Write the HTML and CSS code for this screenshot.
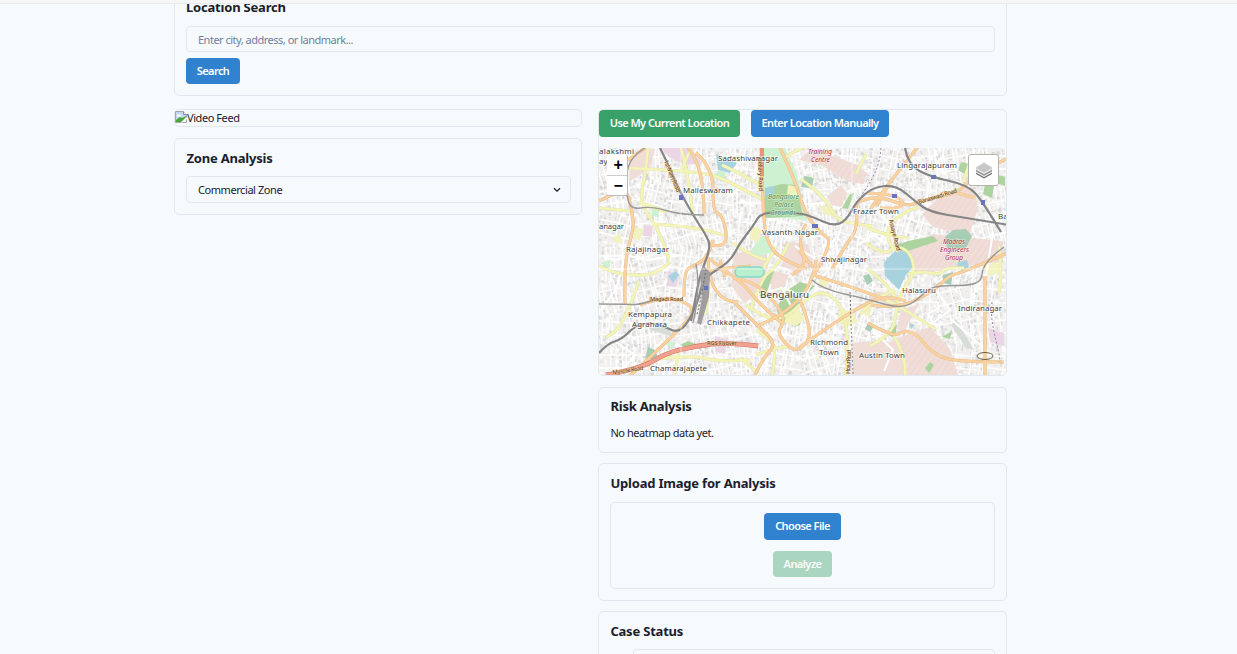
FILE: index.html
```html
<!DOCTYPE html>
<html lang="en">
<head>
<meta charset="utf-8">
<title>Location dashboard</title>
<link rel="stylesheet" href="styles.css">
</head>
<body>
<header class="topbar"></header>
<main class="page">
  <section class="card search-card">
    <h2>Location Search</h2>
    <input class="field" type="text" placeholder="Enter city, address, or landmark...">
    <button class="btn blue search-btn">Search</button>
  </section>
  <div class="columns">
    <div class="column">
      <div class="video"><svg class="broken" viewBox="0 0 12 12"><path d="M.5.5h8l3 3v8H.5z" fill="#c6d7f5" stroke="#a3a7ac"/><path d="M8.5.5v3h3" fill="#fff" stroke="#8d9196"/><path d="M2 4.500q1-2 2.500-1 2 0 1.500 2H2z" fill="#fff"/><path d="M1 11V9l4-3 2 1 4-2v1L6 11z" fill="#4aa535"/><path d="M6 12l6-6v6z" fill="#f7faff"/><path d="M7.500 11.500h4v-3" fill="none" stroke="#a3a7ac"/></svg><span>Video Feed</span></div>
      <section class="card zone-card">
        <h2>Zone Analysis</h2>
        <div class="field select"><span>Commercial Zone</span><svg class="chevron" viewBox="0 0 8 6"><path d="M1 1.200l3 3 3-3" fill="none" stroke="#1a202c" stroke-width="1.300"/></svg></div>
      </section>
    </div>
    <div class="column">
      <section class="map-card">
        <div class="map-actions"><button class="btn green locate">Use My Current Location</button><button class="btn blue manual">Enter Location Manually</button></div>
        <div class="map">
<svg class="tiles" viewBox="599 148 407 227">
  <defs>
    <pattern id="hatch" width="5" height="5" patternUnits="userSpaceOnUse" patternTransform="rotate(35)"><path d="M0 0V5" stroke="#e9cfc8" stroke-width="1"/></pattern>
  </defs>
  <rect x="599" y="148" width="407" height="227" fill="#f1f0ef"/>
  <g id="blocks"></g>
  <g fill="#f0ddd8">
    <path d="M629 160l16-11 10 0-5 20-20 12z"/>
    <path d="M812 148l45 17 10 8-3 11-15-2-28-17-22-5z"/>
    <path d="M734 254l27-6 8 15-8 29-17 11-13-18z"/>
    <path d="M786 242l22 2 5 18-15 13-16-10z"/>
    <path d="M771 270l18 5-8 18-10-2z"/>
    <path d="M827 196l14-11 6 8-6 14-10-2z"/>
    <path d="M922 214l18-18 22-9 12 1 4 20-9 28-36-9z"/>
    <path d="M898 250l35-16 70 7v21l-46 5-38 8-15-10z"/>
    <path d="M875 291l23 4 2 12-30-8z"/>
    <path d="M900 337l30-10 20 22 8 26h-62l-12-30z"/>
    <path d="M882 340l15 4 8 31h-54v-32z"/>
    <path d="M901 310l18-6-15 28-7-3z"/>
  </g>
  <g fill="url(#hatch)">
    <path d="M922 214l18-18 22-9 12 1 4 20-9 28-36-9zM898 250l35-16 70 7v21l-46 5-38 8-15-10zM900 337l30-10 20 22 8 26h-62zM812 148l45 17 7 19-15-2-50-22z"/>
  </g>
  <g fill="#ead6e5">
    <path d="M661 148h28l13 15-17 2-16-8zM667 271l13 3-4 13-8-1zM988 328l16 5v13l-14-4zM715 336l12 3-2 15-9-2zM644 225l9 1-1 11-9-1z"/>
  </g>
  <g fill="#cdf1d1">
    <path d="M762 148h23l12 26 10 47-20-3-23 0zM718 170l8 3-3 9-9-5zM603 262l8-2-2 9-6-2z"/>
    <path d="M760 237l7-3 4 11 11 13-13-5-12 4-9-2z"/>
    <path d="M652 209l7 1-1 7-7-1zM669 341l7 2-4 5-6-3z"/>
  </g>
  <g fill="#add4a0">
    <path d="M765 188l17-4 14 1 7 31-38 2-1-10z"/>
    <path d="M783 293l17-11 15 4-9 9-22 26-4 4-3-15zM764 276l10-5-9 27-9-4z"/>
    <path d="M888 248l20-7 25-5 5 5-33 11zM995 174l10 3v9l-12-4zM961 162l8 2-3 11-8-5zM985 184l9 2-2 12-9-4z"/>
    <path d="M942 337l10-6-2 8zM925 368l5-6 4 3-5 8zM889 328l8-3-2 13-7-3zM797 316l6-3-3 12-6 2zM805 176l9 2-2 9-9-1zM842 208l8-14 4-1-6 16z"/>
    <path d="M680 345l8-4 8 3-9 4z"/>
  </g>
  <g fill="#a7cdb5">
    <path d="M648 347l7 3 4 10-14-2zM804 176l9 3-3 9-9-1zM945 237l8-7 13-1 6 7-6 12h-19zM863 276l6-2 4 7-6 4zM868 323l6 3-4 6-5-3zM943 275l10-3-2 13-8-2z"/>
  </g>
  <g fill="#f1f2bd">
    <path d="M788 315l10-7 7 11-9 7-13-4zM840 309l13 2 5 11-13 6-8-9zM788 185l10 2-1 11-10-4zM818 205l16 4 4 9-14-4zM981 266l16-4 5 10-14 4zM613 237l7-3 2 9-8-1zM635 227l8 2-3 11-7-1zM864 303l8 4-3 10-8-5zM752 226l9 3-2 13-10-3zM820 276l9 3-3 8-8-2z"/>
  </g>
  <g fill="#a9d2df"><path d="M716 154l9 4 12 5-7 10-12-3zM884 262l11-11 15 1 4 14-8 9-7 15-14-14zM668 276l8-5 3 4-6 8zM958 262l9-2 2 7-7 4-5-3zM767 187l8-1-2 8-8 2zM909 323l6 2-4 4z"/></g>
  <g fill="#d7ddd6"><path d="M655 324l13 5 8 9-10-3-15-5zM951 325l5-6 18 31-8-2z"/></g>

  <g class="minor">
    <path d="M604 258l12 2 13-4 18 4 35-5M601 310l15-21 8-28M687 169l2 43M735 172l17 8 8-11M740 200l14 6M836 238l-10 13 5 16-9 10M839 288l-13 20 11 10-6 27M764 276l-7 19 25-7 9 18M784 288l20 10 7-13M856 246l18-11 13 9M876 210l12 12-6 18M919 164l10 18-3 17M943 154l-3 20M936 290l14 20-17 13-5-9 12-7M993 232l-7 44-5-2M952 320l40 35M613 340l22 15-17 19M659 367l33-8M873 330l20 20-9 21M795 246l19 12"/>
  </g>
  <g class="roads yellow-case">
    <path id="y1" d="M648 148l-2 24-7 30 22 31 8 27M599 208l31 3M628 168l42 2 42 4 17 8 33 17M681 148l7 25 5 42M652 224l52 3 21 9M639 202l28 10M599 266l13 7 32 3 14-4 12-10M639 281l-7 21-16 32-10 3M691 148l-10 23M722 165l22 10 19 12"/>
    <path id="y2" d="M801 179l23 17 11 22 17 6 21 2M784 158l16-10 9-3M733 243l18 13 15 4M751 309l10-31 16-11 12-24M776 247l-16 27M746 305l18 13 21 1 22-21 16-7 18 12 8 32-3 40M756 330l12 7 9 13-5 25M740 358l18 15M789 347l-10-1-23 9"/>
    <path id="y3" d="M866 243l18 13 12-11 15 8 4 20-11 14-8 22-3 25-23 12M868 269l19 14 11 18M889 226l-4 19 13 6M908 274l14-3 18 4 6-8 18 1M876 295l25 12 23 15 11 7M894 336l13 22-2 17M861 314l9-14 25-10M999 246l3 24-3 23M893 222l9-10 17-5M866 154l-10 20M868 228l18 8 22 2M970 162l-7 20M655 359l40-4 22 7 33-2M680 348l-6 27M705 270l6 20-6 24"/>
  </g>
  <g class="roads yellow"><use href="#y1"/><use href="#y2"/><use href="#y3"/></g>
  <g class="roads orange-case">
    <path id="o1" d="M599 201l28-15 5 27 2 15-10 33 1 43M628 160l17-12M688 148l16 17v49M696 153l17 14v46h8l7 24-7 11-13-4M684 297v-26l9-5 15-8 5-18M708 258l12 9 25 18 15 20 23 19M733 301l22 22 22 21-14 14-8 17M640 305l21-8 26 5 7 10-12 15-35 33-17 16M708 259l2 43h28M703 272l18-4 30-2M720 260l5 17"/>
    <path id="o2" d="M761 148l2 70 5 27 16 16 23 8M780 148l14 29 10 34 15 21 15 10-20 33M806 224l-14 22 21 21M733 278l22 3 24 26 6 15-8 10 11 15 12 4 14-19-15-34M799 251l13 11-20 13M800 347l21-15 33-22 31-16 21 7M759 325l22-8 32-32 3-25M832 269l13-23 14-19-3-24M813 275l55 17 18 8"/>
    <path id="o3" d="M856 203l19-9 32 13 16-7 35-7 11-13 15-9 22-12M871 208l13-19 33-41M868 193l32 1 4 16-24-2M871 305l27 4 34-17 18-17 14-3 41-18M868 323l25 14 10-6 13 2 16 20 22 9h50M985 276v99M877 206l12-22M958 193l17 5M995 255l-12 10"/>
  </g>
  <g class="roads orange"><use href="#o1"/><use href="#o2"/><use href="#o3"/></g>
  <g class="roads red-case"><path id="red" d="M606 375l36-7 24-15 30-7 31-4 31 4"/></g>
  <use href="#red" fill="none" stroke="#f2a18d" stroke-width="3.600"/>
  <path d="M762 148v28" stroke="#e89478" stroke-width="4"/>
  <rect x="735" y="267" width="29" height="10" rx="5" fill="#b7efcf" stroke="#85d9c5" stroke-width="1.500"/>
  <g class="roads rail">
    <path class="main-line" d="M660 148l10 20 8 20 15 27 13 20 5 12-11 28-4 20-5 26M599 353l8-9 15-5 13-13 12-3 15 2 15 8 11-10 11-24 4-21 27-16 9-18 15-19 7-13 39 1 13 4 20 9 13-5 10-19 17-15 23-2 20 17 14 10 36 6 43 7M905 148l3 17 23 12 37 8 15 17 18 30"/>
    <path d="M645 148l-17 10-2 32 4 20 21-4 30 9 23 0M599 304l29 0 11 1 23-7M812 280l10 9 45 10 34 10 18-10 12-14 51 1V263l22-16M696 264l5 24-8 35" />
  </g>
  <path d="M703 265l7 7-1 25-8 28-4-2 5-26-2-24z" fill="#a09e9f"/>
  <path d="M706 269l-4 24-5 22M850 292l3 83" class="dashes"/>
  <path d="M881 148c-1 21-12 36-20 48M992 302c-3 23 7 43 8 60" fill="none" stroke="#a186ac" stroke-dasharray="2 2"/>
  <path d="M681 148v227M852 148v227M599 269h407" stroke="#fff" stroke-opacity=".55"/>
  <g fill="#6874bb"><path d="M679 195h4v5h-4zM704 286h4v4h-4zM812 224h6v4h-6zM892 194h5v4h-5zM931 175h5v4h-5zM981 200h4v5h-4z"/></g>
  <ellipse cx="985" cy="356" rx="8" ry="3.500" fill="none" stroke="#705d3c"/>

  <g class="place">
    <text x="599" y="154" textLength="35">alakshmi</text><text x="599" y="164">ay</text>
    <text x="718" y="161" textLength="60">Sadashivanagar</text><text x="683" y="193" textLength="50">Malleswaram</text>
    <text x="762" y="235" textLength="56">Vasanth Nagar</text><text x="853" y="214" textLength="46">Frazer Town</text>
    <text x="897" y="168" textLength="60">Lingarajapuram</text><text x="998" y="219">Ba</text>
    <text x="599" y="229" textLength="25">anagar</text><text x="626" y="252" textLength="43">Rajajinagar</text>
    <text x="821" y="262" textLength="46">Shivajinagar</text><text x="902" y="293" textLength="34">Halasuru</text>
    <text x="958" y="311" textLength="44">Indiranagar</text><text x="628" y="317" textLength="44">Kempapura</text><text x="632" y="327" textLength="35">Agrahara</text>
    <text x="707" y="325" textLength="43">Chikkapete</text><text x="810" y="345" textLength="38">Richmond</text><text x="819" y="355" textLength="20">Town</text>
    <text x="859" y="358" textLength="46">Austin Town</text><text x="650" y="371" textLength="57">Chamarajapete</text>
    <text class="city" x="760" y="298" textLength="49">Bengaluru</text>
  </g>
  <g class="green-place"><text x="768" y="199" textLength="31">Bangalore</text><text x="774" y="207" textLength="20">Palace</text><text x="770" y="215" textLength="26">Grounds</text></g>
  <g class="red-place"><text x="808" y="154" textLength="24">Training</text><text x="811" y="162" textLength="19">Centre</text><text x="943" y="244" textLength="22">Madras</text><text x="940" y="252" textLength="29">Engineers</text><text x="945" y="260" textLength="18">Group</text></g>
  <g class="road-name"><text x="650" y="301" textLength="33">Magadi Road</text><text transform="translate(919 204) rotate(-17)" textLength="40">Banaswadi Road</text><text transform="translate(758 158) rotate(88)" textLength="33">Bellary Road</text><text transform="translate(664 161) rotate(68)" textLength="34">1st Main Road</text><text transform="translate(889 220) rotate(76)" textLength="32">Assaye Road</text><text x="707" y="345" textLength="30">RGS Flyover</text><text transform="translate(613 374.500) rotate(-9)" textLength="31">Mysore Road</text><text transform="translate(850 374) rotate(-88)" textLength="24">Hosur Road</text></g>
</svg>
          <div class="zoom"><span>+</span><span>−</span></div>
          <div class="layers"><svg viewBox="0 0 20 20"><path d="M2 12.500l8 4.500 8-4.500v1.500l-8 4.500-8-4.500z" fill="#777"/><path d="M2 9.500l8 4.500 8-4.500v2L10 16l-8-4.500z" fill="#999"/><path d="M2 7.500l8-5 8 5v1l-8 4.500-8-4.500z" fill="#c8c8c8"/></svg></div>
        </div>
      </section>
      <section class="card risk-card"><h2>Risk Analysis</h2><p>No heatmap data yet.</p></section>
      <section class="card upload-card"><h2>Upload Image for Analysis</h2><div class="drop"><button class="btn blue choose">Choose File</button><button class="btn green analyze">Analyze</button></div></section>
      <section class="card case-card"><h2>Case Status</h2><div class="case-item"></div></section>
    </div>
  </div>
</main>
<script src="map.js"></script>
</body>
</html>
```
FILE: styles.css
```css
* { box-sizing: border-box; }
body { margin: 0; height: 654px; overflow: hidden; background: #f7fafd; color: #1a202c; font: 11px "Noto Sans", sans-serif; letter-spacing: -.43px; }
.topbar { height: 4px; background: #f6f6f6; border-bottom: 1px solid #e5e8ec; }
.page { display: flow-root; width: 833px; height: 650px; margin-left: 174px; overflow: hidden; }
.card, .map-card, .video { border: 1px solid #e2e8f0; border-radius: 5px; }
.card { padding: 0 11px; }
h2 { margin: 0; font-size: 13px; line-height: 18px; font-weight: 700; letter-spacing: -.2px; white-space: nowrap; }
.column h2 { padding-left: .4px; }
p { margin: 10px 0 0; padding-left: .4px; line-height: 16px; }
.search-card { height: 102px; margin-top: -10px; padding-top: 3px; }
.search-card h2 { margin-bottom: 10px; }
.field { display: block; width: 100%; height: 26px; margin: 9px 0 6px; padding: 0 11px; border: 1px solid #e2e8f0; border-radius: 4px; background: transparent; font: inherit; letter-spacing: inherit; color: inherit; }
.field::placeholder { color: #718096; opacity: 1; }
.search-card .field { letter-spacing: -.5px; }
.btn { border: 0; border-radius: 4px; height: 27px; padding: 0 0 2px; color: #fff; font: 600 11px "Noto Sans", sans-serif; letter-spacing: -.56px; white-space: nowrap; }
.blue { background: #3182ce; }
.green { background: #38a169; }
.search-btn { width: 54px; height: 26px; display: block; }
.columns { display: grid; grid-template-columns: 408px 409px; gap: 16px; margin-top: 13px; }
.column { display: flex; flex-direction: column; }
.video { height: 18px; display: flex; align-items: center; line-height: 16px; }
.broken { width: 12px; height: 12px; margin-bottom: 3px; }
.zone-card { height: 77px; margin-top: 11px; padding: 10px 10px 0 11px; }
.select { display: flex; align-items: center; justify-content: space-between; height: 27px; margin-top: 9px; padding-right: 9px; }
.chevron { width: 8px; height: 6px; }
.map-card { height: 267px; overflow: hidden; }
.map-actions { display: flex; gap: 11px; }
.locate { width: 141px; }
.manual { width: 138px; }
.map { position: relative; height: 227px; margin-top: 11px; }
.tiles { display: block; width: 407px; height: 227px; }
.tiles text { letter-spacing: 0; }
.roads { fill: none; stroke-linejoin: round; }
.minor { fill: none; stroke: #fff; stroke-width: 2; }
.yellow-case { stroke: #dcdfb0; stroke-width: 3.2; }
.yellow { stroke: #f4f5b4; stroke-width: 2.5; }
.orange-case { stroke: #e5b98b; stroke-width: 3.2; }
.orange { stroke: #fad2a0; stroke-width: 2.4; }
.red-case { stroke: #d0766d; stroke-width: 4.8; }
.rail { stroke: #999; stroke-width: 1.4; }
.rail .main-line { stroke: #858585; stroke-width: 2.2; }
.dashes { fill: none; stroke: #6e6e6e; stroke-width: 1; stroke-dasharray: 2 2; }
.place { font: 7.9px "Noto Sans", sans-serif; fill: #3c3c3c; stroke: #fff; stroke-opacity: .75; stroke-width: 1.6; paint-order: stroke; }
.place .city { font-size: 9.8px; }
.green-place, .red-place { font: italic 6.8px "Noto Sans", sans-serif; stroke: #fff; stroke-opacity: .6; stroke-width: 1; paint-order: stroke; }
.green-place { fill: #3f9055; }
.red-place { fill: #b02a3a; }
.road-name { font: 5.8px "Noto Sans", sans-serif; fill: #4b3929; stroke: #fad29c; stroke-width: .6; paint-order: stroke; }
.zoom { position: absolute; left: 8px; top: 7px; width: 21px; border: 1px solid #bbb; border-width: 0 1px 1px 0; border-radius: 2px; background: #fff; color: #000; }
.zoom span { display: block; height: 20px; padding-left: 2px; text-align: center; font: 700 16px/20px "Liberation Sans", sans-serif; }
.zoom span + span { border-top: 1px solid #ccc; line-height: 19px; }
.layers { position: absolute; right: 7px; top: 6px; width: 31px; height: 32px; border: 1px solid #b6b2ad; border-radius: 3px; background: #fff; display: flex; align-items: center; justify-content: center; }
.layers svg { width: 20px; height: 20px; }
.risk-card { height: 66px; margin-top: 11px; padding-top: 9px; }
.upload-card { height: 138px; margin-top: 10px; padding-top: 10px; }
.drop { height: 87px; margin-top: 10px; padding-top: 10px; border: 1px solid #e2e8f0; border-radius: 5px; display: flex; flex-direction: column; align-items: center; gap: 11px; }
.choose { width: 77px; }
.analyze { width: 59px; height: 26px; opacity: .4; }
.case-card { height: 90px; margin-top: 10px; padding-top: 10px; }
.case-item { height: 40px; margin: 9px 0 0 23px; border: 1px solid #e2e8f0; border-radius: 4px; }
```
FILE: map.js
```js
// Fill the map ground with rotated neighbourhood grids: pale buildings and white lanes.
var seed = 17;
function rnd() { seed = (seed * 16807) % 2147483647; return seed / 2147483647; }
var out = '';
for (var gx = 599; gx < 1006; gx += 34) {
  for (var gy = 148; gy < 375; gy += 33) {
    var angle = Math.round(rnd() * 36 - 18);
    out += '<g transform="rotate(' + angle + ' ' + (gx + 17) + ' ' + (gy + 16) + ')">';
    for (var x = gx - 2; x < gx + 36; x += 3 + rnd() * 3) {
      for (var y = gy - 2; y < gy + 35; y += 3 + rnd() * 4) {
        var fill = rnd() > .72 ? '#d8d6d6' : (rnd() > .5 ? '#e3e2e2' : '#fdfdfd');
        out += '<rect x="' + x.toFixed(1) + '" y="' + y.toFixed(1) + '" width="' + (1 + rnd() * 2.5).toFixed(1) + '" height="' + (1 + rnd() * 3).toFixed(1) + '" fill="' + fill + '"/>';
      }
      if (rnd() > .45) out += '<path d="M' + x.toFixed(1) + ' ' + gy + 'v34" stroke="#fff" stroke-width="1.3"/>';
    }
    out += '<path d="M' + gx + ' ' + (gy + 9) + 'h34m0 13h-34" stroke="#fff" stroke-width="1.5"/></g>';
  }
}
document.getElementById('blocks').innerHTML = out;

// Round the corners of each road by drawing curves through its segment midpoints.
function smooth(d) {
  return d.split(/(?=M)/).map(function (line) {
    var pts = [], x = 0, y = 0;
    (line.match(/[MlhvHV][^MlhvHV]*/g) || []).forEach(function (part) {
      var n = (part.slice(1).match(/-?[\d.]+/g) || []).map(Number), c = part[0];
      if (c === 'M') { x = n[0]; y = n[1]; pts.push([x, y]); }
      else if (c === 'l') for (var i = 0; i < n.length; i += 2) { x += n[i]; y += n[i + 1]; pts.push([x, y]); }
      else {
        if (c === 'h') x += n[0];
        if (c === 'v') y += n[0];
        if (c === 'H') x = n[0];
        if (c === 'V') y = n[0];
        pts.push([x, y]);
      }
    });
    var s = 'M' + pts[0];
    for (var k = 1; k < pts.length - 1; k++) {
      var p = pts[k], q = pts[k + 1], end = k === pts.length - 2;
      s += 'Q' + p + ' ' + (end ? q : [(p[0] + q[0]) / 2, (p[1] + q[1]) / 2]);
    }
    if (pts.length === 2) s += 'L' + pts[1];
    return s;
  }).join('');
}
document.querySelectorAll('.roads path').forEach(function (p) {
  p.setAttribute('d', smooth(p.getAttribute('d')));
});
```
